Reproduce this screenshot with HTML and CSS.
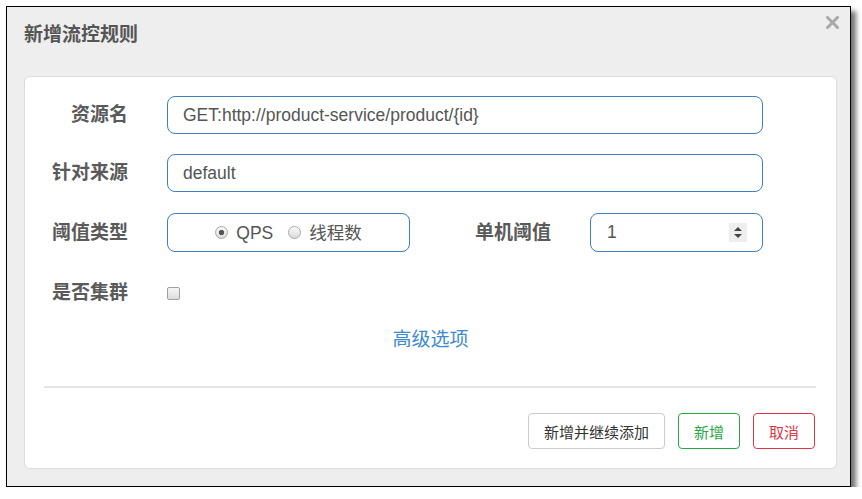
FILE: index.html
```html
<!DOCTYPE html>
<html lang="zh-CN">
<head>
<meta charset="utf-8">
<title>新增流控规则</title>
<link rel="stylesheet" href="styles.css">
</head>
<body>
<div class="dialog">
  <div class="header">
    <h3 class="title">新增流控规则</h3>
    <span class="close" aria-label="关闭">
      <svg width="13" height="13" viewBox="0 0 13 13"><path d="M1.5 1.5 L11.5 11.5 M11.5 1.5 L1.5 11.5" stroke="#a9a9a9" stroke-width="3" stroke-linecap="square" fill="none"/></svg>
    </span>
  </div>
  <div class="panel">
    <div class="row row1">
      <label class="label">资源名</label>
      <div class="input wide">GET:http://product-service/product/{id}</div>
    </div>
    <div class="row row2">
      <label class="label">针对来源</label>
      <div class="input wide">default</div>
    </div>
    <div class="row row3">
      <label class="label">阈值类型</label>
      <div class="input typebox">
        <span class="radio checked"></span><span class="rtext">QPS</span>
        <span class="radio second"></span><span class="rtext">线程数</span>
      </div>
      <label class="label label2">单机阈值</label>
      <div class="input numbox">
        <span>1</span>
        <svg class="spin" width="18" height="19" viewBox="0 0 18 19"><rect width="18" height="19" fill="#eeeeee"/><path d="M5 8 L9 4 L13 8 Z" fill="#444"/><path d="M5 11 L13 11 L9 15 Z" fill="#444"/></svg>
      </div>
    </div>
    <div class="row row4">
      <label class="label">是否集群</label>
      <span class="checkbox"></span>
    </div>
    <div class="advanced"><a class="link">高级选项</a></div>
    <div class="divider"></div>
    <div class="actions">
      <button class="btn btn-default">新增并继续添加</button>
      <button class="btn btn-success">新增</button>
      <button class="btn btn-danger">取消</button>
    </div>
  </div>
</div>
</body>
</html>
```

FILE: styles.css
```css
html, body {
  margin: 0;
  padding: 0;
  background: #ffffff;
}
body {
  font-family: "Liberation Sans", "Noto Sans CJK SC", sans-serif;
  color: #555;
}
.dialog {
  margin: 6px 0 0 6px;
  width: 845px;
  height: 481px;
  box-sizing: border-box;
  border: 1px solid #000;
  background: #eeeeee;
  box-shadow: 5px 5px 5px rgba(0, 0, 0, 0.55);
  display: flex;
  flex-direction: column;
}
.header {
  height: 69px;
  display: flex;
  justify-content: space-between;
  align-items: flex-start;
  padding: 0 11px 0 17px;
  flex: none;
}
.title {
  margin: 16px 0 0 0;
  font-size: 19px;
  line-height: 24px;
  font-weight: bold;
  color: #555;
}
.close {
  margin-top: 9px;
  display: block;
  width: 13px;
  height: 13px;
}
.close svg { display: block; }
.panel {
  flex: 1;
  margin: 0 13px 17px 17px;
  background: #fff;
  border: 1px solid #dddddd;
  border-radius: 6px;
  padding-top: 19px;
}
.row {
  display: flex;
  align-items: center;
  height: 38px;
}
.row2 { margin-top: 20px; }
.row3 { margin-top: 21px; height: 39px; }
.row4 { margin-top: 22px; }
.label {
  width: 103px;
  margin-right: 39px;
  text-align: right;
  font-size: 19px;
  font-weight: bold;
  color: #5a5a5a;
  line-height: 24px;
  flex: none;
}
.input {
  box-sizing: border-box;
  height: 100%;
  border: 1px solid #3f7fc0;
  border-radius: 8px;
  font-size: 17.5px;
  color: #555;
  display: flex;
  align-items: center;
  flex: none;
}
.wide {
  width: 596px;
  padding: 0 15px;
}
.typebox {
  width: 243px;
  justify-content: center;
}
.radio {
  box-sizing: border-box;
  width: 13px;
  height: 13px;
  border-radius: 50%;
  border: 1px solid #a9a9a9;
  background: linear-gradient(#fbfbfb, #d9d9d9);
  flex: none;
}
.radio.checked {
  background: radial-gradient(circle, #555 0, #555 2.4px, transparent 3px), linear-gradient(#fbfbfb, #d9d9d9);
}
.radio.second { margin-left: 15px; }
.rtext {
  margin-left: 8px;
  line-height: 22px;
}
.label2 {
  width: 141px;
}
.numbox {
  width: 173px;
  padding: 0 15px 0 16px;
  justify-content: space-between;
}
.spin { display: block; }
.checkbox {
  box-sizing: border-box;
  width: 13px;
  height: 13px;
  border: 1px solid #a0a0a0;
  border-radius: 2px;
  background: linear-gradient(#f6f6f6, #dcdcdc);
  margin-top: 1px;
}
.advanced {
  margin-top: 16px;
  text-align: center;
  font-size: 19px;
  line-height: 24px;
}
.link {
  color: #3d8ad0;
  cursor: pointer;
}
.divider {
  margin: 34px 20px 0 19px;
  height: 2px;
  background: #e5e5e5;
}
.actions {
  margin-top: 25px;
  display: flex;
  justify-content: flex-end;
  gap: 13px;
  padding-right: 21px;
}
.btn {
  height: 36px;
  box-sizing: border-box;
  padding: 0 15px;
  font-family: "Liberation Sans", "Noto Sans CJK SC", sans-serif;
  font-size: 15px;
  background: #fff;
  border-radius: 4px;
  border: 1px solid #ccc;
  cursor: pointer;
}
.btn-default { color: #333; border-color: #cccccc; }
.btn-success { color: #28a745; border-color: #28a745; }
.btn-danger { color: #dc3545; border-color: #dc3545; }
```
